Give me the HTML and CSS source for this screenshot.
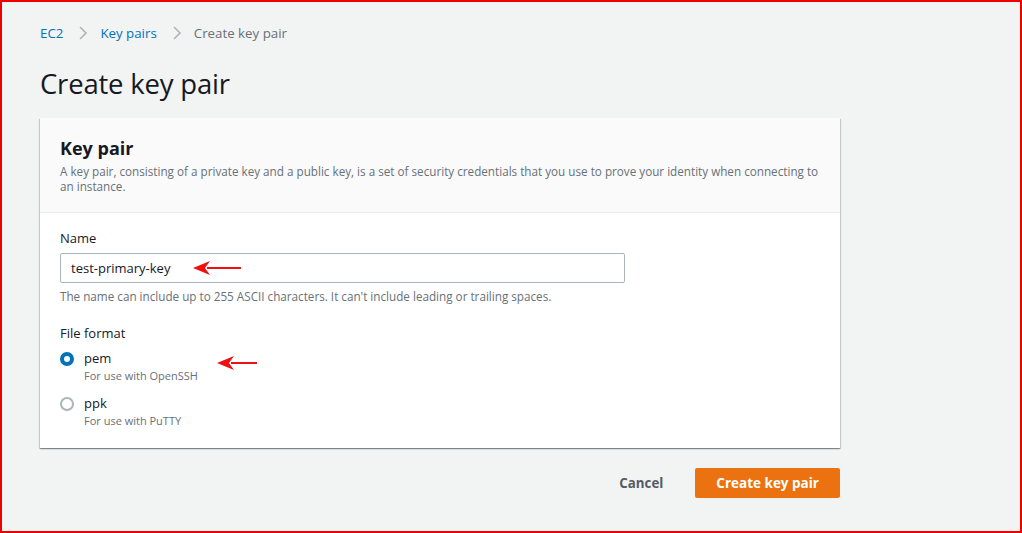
FILE: index.html
```html
<!DOCTYPE html>
<html>
<head>
    <title>Create key pair</title>
    <link rel="stylesheet" href="styles.css">
</head>
<body>
    <div class="frame">
        <div class="page">
            <nav class="crumbs">
                <a href="#">EC2</a>
                <span class="sep">
                    <svg width="10" height="16" viewBox="0 0 10 16"><path d="M2 2l6 6-6 6" fill="none" stroke="#aab7b8" stroke-width="1.6"/></svg>
                </span>
                <a href="#">Key pairs</a>
                <span class="sep">
                    <svg width="10" height="16" viewBox="0 0 10 16"><path d="M2 2l6 6-6 6" fill="none" stroke="#aab7b8" stroke-width="1.6"/></svg>
                </span>
                <span class="current">Create key pair</span>
            </nav>

            <h1>Create key pair</h1>

            <div class="card">
                <div class="card-head">
                    <h2>Key pair</h2>
                    <p>A key pair, consisting of a private key and a public key, is a set of security credentials that you use to prove your identity when connecting to an instance.</p>
                </div>
                <div class="card-body">
                    <div class="field">
                        <label class="label">Name</label>
                        <div class="input">test-primary-key</div>
                        <div class="hint">The name can include up to 255 ASCII characters. It can't include leading or trailing spaces.</div>
                    </div>

                    <div class="field">
                        <div class="label">File format</div>
                        <div class="radio">
                            <span class="dot checked"></span>
                            <div>
                                <div class="opt">pem</div>
                                <div class="opt-desc">For use with OpenSSH</div>
                            </div>
                        </div>
                        <div class="radio">
                            <span class="dot"></span>
                            <div>
                                <div class="opt">ppk</div>
                                <div class="opt-desc">For use with PuTTY</div>
                            </div>
                        </div>
                    </div>
                </div>

                <!-- annotation arrows -->
                <svg class="arrow arrow-name" width="50" height="16" viewBox="0 0 50 16">
                    <path d="M14 8H48" stroke="#ee1111" stroke-width="2"/>
                    <path d="M0 8L17 1L12 8L17 15Z" fill="#ee1111"/>
                </svg>
                <svg class="arrow arrow-pem" width="42" height="16" viewBox="0 0 42 16">
                    <path d="M14 8H40" stroke="#ee1111" stroke-width="2"/>
                    <path d="M0 8L17 1L12 8L17 15Z" fill="#ee1111"/>
                </svg>
            </div>

            <div class="actions">
                <a href="#" class="btn-link">Cancel</a>
                <a href="#" class="btn-primary">Create key pair</a>
            </div>
        </div>
    </div>
</body>
</html>
```

FILE: styles.css
```css
html, body {
    margin: 0;
    padding: 0;
    height: 100%;
}
body {
    font-family: "Open Sans", "Noto Sans", Arial, sans-serif;
    color: #16191f;
    background: #ffffff;
}
.frame {
    box-sizing: border-box;
    height: 533px;
    border: 2px solid #ee0000;
    background: #f2f3f3;
    overflow: hidden;
}
.page {
    width: 801px;
    padding: 20px 0 0 37px;
}
.crumbs {
    display: flex;
    align-items: center;
    height: 22px;
    font-size: 13.3px;
    padding-left: 1px;
}
.crumbs a {
    color: #0073bb;
    text-decoration: none;
}
.crumbs .sep {
    display: flex;
    margin: 0 12px 0 15px;
}
.crumbs .current {
    color: #687078;
}
h1 {
    font-size: 27.5px;
    font-weight: 400;
    margin: 20px 0 0 1px;
    line-height: 40px;
    letter-spacing: -0.2px;
}
.card {
    position: relative;
    margin: 14px 0 0 1px;
    background: #ffffff;
    box-shadow: 0 1px 1px 0 rgba(0, 28, 36, 0.3), 1px 1px 1px 0 rgba(0, 28, 36, 0.15), -1px 1px 1px 0 rgba(0, 28, 36, 0.15);
}
.card-head {
    background: #fafafa;
    border-bottom: 1px solid #eaeded;
    padding: 18px 20px 18px 20px;
}
.card-head h2 {
    margin: 0;
    font-size: 18px;
    font-weight: 700;
    line-height: 24px;
}
.card-head p {
    margin: 4px 0 0 0;
    font-size: 11.7px;
    line-height: 15px;
    color: #687078;
}
.card-body {
    padding: 15px 20px 19px 20px;
}
.field {
    margin-bottom: 19px;
}
.field:last-child {
    margin-bottom: 0;
}
.label {
    display: block;
    font-size: 13px;
    line-height: 20px;
    margin-bottom: 5px;
}
.input {
    box-sizing: border-box;
    width: 565px;
    height: 30px;
    border: 1px solid #aab7b8;
    border-radius: 2px;
    padding: 0 10px;
    font-size: 13px;
    line-height: 28px;
    background: #ffffff;
}
.hint {
    font-size: 11.7px;
    line-height: 16px;
    color: #687078;
    margin-top: 5px;
}
.radio {
    display: flex;
    gap: 10px;
    margin-bottom: 9px;
}
.field .label + .radio {
    margin-top: 1px;
}
.radio:last-child {
    margin-bottom: 0;
}
.dot {
    box-sizing: border-box;
    width: 14px;
    height: 14px;
    margin-top: 4px;
    border-radius: 50%;
    border: 2px solid #aab7b8;
    background: #ffffff;
}
.dot.checked {
    border: 4px solid #0073bb;
}
.opt {
    font-size: 13px;
    line-height: 20px;
}
.opt-desc {
    font-size: 11px;
    line-height: 16px;
    color: #687078;
}
.arrow {
    position: absolute;
}
.arrow-name {
    left: 153px;
    top: 142px;
}
.arrow-pem {
    left: 177px;
    top: 237px;
}
.actions {
    display: flex;
    justify-content: flex-end;
    align-items: center;
    gap: 32px;
    margin-top: 20px;
}
.btn-link {
    color: #545b64;
    font-weight: 700;
    font-size: 13.3px;
    text-decoration: none;
}
.btn-primary {
    display: block;
    background: #ec7211;
    color: #ffffff;
    font-weight: 700;
    font-size: 13.5px;
    text-decoration: none;
    line-height: 30px;
    padding: 0 21px;
    border-radius: 2px;
}
```
